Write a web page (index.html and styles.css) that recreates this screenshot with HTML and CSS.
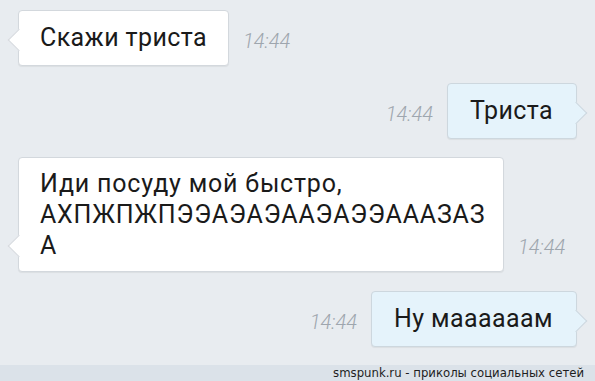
FILE: index.html
```html
<!DOCTYPE html>
<html lang="ru">
<head>
  <meta charset="UTF-8" />
  <meta name="viewport" content="width=device-width, initial-scale=1.0" />
  <title>Чат</title>
  <link rel="stylesheet" href="styles.css">
</head>
<body>
  <div class="chat">
    <div class="row in r1">
      <div class="bubble">Скажи триста</div>
      <span class="time">14:44</span>
    </div>
    <div class="row out r2">
      <span class="time">14:44</span>
      <div class="bubble">Триста</div>
    </div>
    <div class="row in r3">
      <div class="bubble long">Иди посуду мой быстро,<br>АХПЖПЖПЭЭАЭАЭААЭАЭЭАААЗАЗ<br>А</div>
      <span class="time">14:44</span>
    </div>
    <div class="row out r4">
      <span class="time">14:44</span>
      <div class="bubble">Ну маааааам</div>
    </div>
  </div>
  <div class="footer">smspunk.ru - приколы социальных сетей</div>
</body>
</html>
```

FILE: styles.css
```css
body {
  margin: 0;
  background: #e8ecf0;
  font-family: Roboto, 'Noto Sans', sans-serif;
  color: #1a1a1a;
  height: 381px;
  overflow: hidden;
  display: flex;
  flex-direction: column;
}

.chat {
  flex: 1;
  display: flex;
  flex-direction: column;
  padding: 10px 18px 0 18px;
}

.row {
  display: flex;
  align-items: flex-end;
  gap: 14px;
}

.row.out {
  justify-content: flex-end;
}

.r2 { margin-top: 17px; }
.r3 { margin-top: 18px; }
.r4 { margin-top: 19px; }

.bubble {
  position: relative;
  background: #ffffff;
  border: 1px solid #d3d8dd;
  border-radius: 4px;
  box-shadow: 0 1px 1px rgba(0,0,0,0.06);
  padding: 11px 21px 12px 21px;
  font-size: 25px;
  letter-spacing: 0.4px;
  line-height: 31px;
  white-space: nowrap;
}

.out .bubble {
  background: #e5f3fb;
  border-color: #cdd7de;
  padding-left: 22px;
  padding-right: 23px;
}

.bubble.long {
  width: 486px;
  box-sizing: border-box;
  padding-top: 10px;
  padding-bottom: 10px;
  letter-spacing: 0.8px;
}

.bubble::before {
  content: '';
  position: absolute;
  bottom: 17px;
  width: 15px;
  height: 15px;
  background: inherit;
  transform: rotate(45deg);
}

.in .bubble::before {
  left: -8px;
  border-left: 1px solid #d3d8dd;
  border-bottom: 1px solid #d3d8dd;
}

.out .bubble::before {
  right: -8px;
  border-right: 1px solid #cdd7de;
  border-top: 1px solid #cdd7de;
}

.time {
  font-size: 20px;
  font-style: italic;
  font-weight: 300;
  color: #9ea6ae;
  margin-bottom: 13px;
}

.footer {
  height: 16px;
  background: #dbe2e9;
  text-align: right;
  padding-right: 11px;
  font-family: 'DejaVu Sans Condensed', 'DejaVu Sans', sans-serif;
  font-size: 13px;
  line-height: 16px;
  color: #1e1e1e;
}
```
